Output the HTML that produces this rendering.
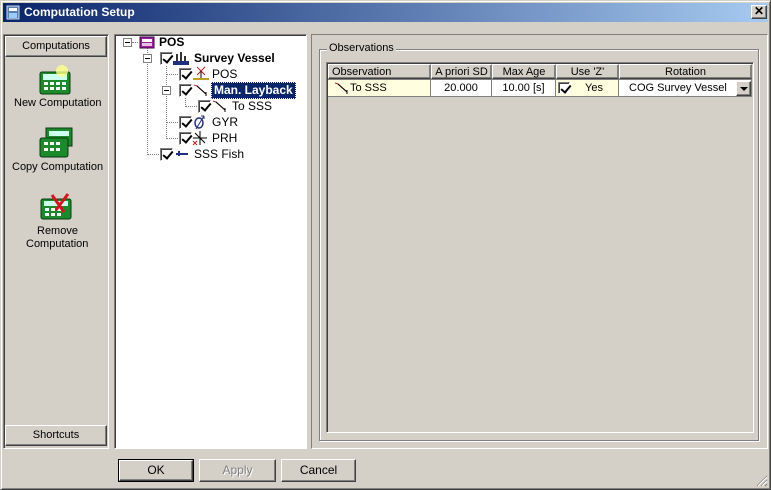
<!DOCTYPE html>
<html><head><style>
*{margin:0;padding:0;box-sizing:border-box}
body{width:771px;height:490px;background:#d4d0c8;font-family:"Liberation Sans",sans-serif;font-size:11px;position:relative;overflow:hidden;color:#000}
.a{position:absolute}
.raise{border:1px solid;border-color:#fff #404040 #404040 #fff;box-shadow:inset -1px -1px #808080}
.sunk{border:1px solid;border-color:#808080 #fff #fff #808080;box-shadow:inset 1px 1px #404040}
.etch{border:1px solid #808080;box-shadow:1px 1px #fff, inset 1px 1px #fff}
.cb{position:absolute;width:13px;height:13px;background:#fff;border:1px solid;border-color:#808080 #fff #fff #808080;box-shadow:inset 1px 1px #404040}
.cb:after{content:"";position:absolute;left:4px;top:0px;width:4px;height:8px;border:solid #000;border-width:0 2px 2px 0;transform:rotate(40deg)}
.ex{position:absolute;width:9px;height:9px;border:1px solid #808080;background:#fff}
.ex:after{content:"";position:absolute;left:1px;top:3px;width:5px;height:1px;background:#000}
.t{position:absolute;white-space:nowrap;font-size:12px}
.dv{position:absolute;border-left:1px dotted #808080}
.dh{position:absolute;border-top:1px dotted #808080}
.btn{position:absolute;height:23px;text-align:center;line-height:21px;font-size:12px}
.cell{position:absolute;top:0;height:100%;border-right:1px solid #808080;text-align:center;line-height:15px;font-size:11px}
</style></head><body>
<div class="a" style="left:0;top:0;width:771px;height:490px;border:1px solid;border-color:#d4d0c8 #404040 #404040 #d4d0c8;box-shadow:inset 1px 1px #fff,inset -1px -1px #808080"></div>
<div class="a" style="left:3px;top:3px;width:765px;height:19px;background:linear-gradient(to right,#0a246a,#a6caf0)"></div>
<svg class="a" style="left:6px;top:5px" width="14" height="15"><rect x="1" y="1" width="12" height="13" fill="#5a7fb0" stroke="#cde"/><rect x="3" y="3" width="8" height="3" fill="#fff"/><rect x="3" y="8" width="8" height="5" fill="#9cf"/></svg>
<div class="t" style="left:24px;top:5px;color:#fff;font-weight:bold;font-size:12px">Computation Setup</div>
<div class="a raise" style="left:751px;top:5px;width:16px;height:14px;background:#d4d0c8;text-align:center;font-size:12px;line-height:11px;font-weight:bold">✕</div>

<div class="a sunk" style="left:3px;top:34px;width:106px;height:415px"></div>
<div class="a raise" style="left:5px;top:36px;width:102px;height:21px;text-align:center;line-height:19px;font-size:11px">Computations</div>
<div class="a raise" style="left:5px;top:425px;width:102px;height:21px;text-align:center;line-height:19px;font-size:11px">Shortcuts</div>
<svg class="a" style="left:38px;top:64px" width="36" height="32"><rect x="2" y="8" width="30" height="22" rx="2" fill="#1a8a2a" stroke="#0a3a10"/><rect x="5" y="10" width="24" height="6" fill="#cfe"/><g fill="#fff"><rect x="6" y="18" width="4" height="3"/><rect x="12" y="18" width="4" height="3"/><rect x="18" y="18" width="4" height="3"/><rect x="24" y="18" width="4" height="3"/><rect x="6" y="23" width="4" height="3"/><rect x="12" y="23" width="4" height="3"/><rect x="18" y="23" width="4" height="3"/><rect x="24" y="23" width="4" height="3"/></g><circle cx="24" cy="7" r="6" fill="#ff8" opacity=".8"/></svg>
<div class="t" style="left:14px;top:97px;font-size:11px">New Computation</div>
<svg class="a" style="left:38px;top:126px" width="36" height="32"><rect x="8" y="2" width="26" height="18" fill="#1a8a2a" stroke="#0a3a10"/><rect x="11" y="5" width="20" height="5" fill="#cfe"/><rect x="2" y="12" width="28" height="19" rx="2" fill="#1a8a2a" stroke="#0a3a10"/><g fill="#fff"><rect x="6" y="16" width="4" height="3"/><rect x="12" y="16" width="4" height="3"/><rect x="18" y="16" width="4" height="3"/><rect x="6" y="22" width="4" height="3"/><rect x="12" y="22" width="4" height="3"/><rect x="18" y="22" width="4" height="3"/></g></svg>
<div class="t" style="left:12px;top:161px;font-size:11px">Copy Computation</div>
<svg class="a" style="left:38px;top:192px" width="36" height="30"><rect x="3" y="7" width="30" height="20" rx="2" fill="#1a8a2a" stroke="#0a3a10"/><rect x="6" y="9" width="24" height="5" fill="#cfe"/><g fill="#fff"><rect x="7" y="16" width="4" height="3"/><rect x="13" y="16" width="4" height="3"/><rect x="19" y="16" width="4" height="3"/><rect x="7" y="21" width="4" height="3"/><rect x="13" y="21" width="4" height="3"/><rect x="19" y="21" width="4" height="3"/></g><path d="M14 3 L26 20 M30 2 L18 18" stroke="#e01020" stroke-width="3"/></svg>
<div class="t" style="left:37px;top:225px;font-size:11px">Remove</div>
<div class="t" style="left:26px;top:238px;font-size:11px">Computation</div>

<div class="a sunk" style="left:114px;top:34px;width:193px;height:415px;background:#fff"></div>
<div class="dv" style="left:147px;top:48px;height:107px"></div>
<div class="dh" style="left:147px;top:154px;width:12px"></div>
<div class="dv" style="left:166px;top:64px;height:75px"></div>
<div class="dh" style="left:166px;top:74px;width:12px"></div>
<div class="dh" style="left:166px;top:122px;width:12px"></div>
<div class="dh" style="left:166px;top:138px;width:12px"></div>
<div class="dv" style="left:185px;top:96px;height:11px"></div>
<div class="dh" style="left:185px;top:106px;width:12px"></div>
<div class="dh" style="left:132px;top:42px;width:6px"></div>
<div class="ex" style="left:123px;top:38px"></div>
<svg class="a" style="left:139px;top:36px" width="16" height="13"><rect x="1" y="1" width="14" height="11" fill="#a020a0" stroke="#400040"/><rect x="3" y="3" width="10" height="3" fill="#fff"/><rect x="3" y="7" width="10" height="3" fill="#e8c0e8"/></svg>
<div class="t" style="left:159px;top:35px;font-weight:bold">POS</div>
<div class="ex" style="left:143px;top:54px"></div>
<div class="cb" style="left:160px;top:52px"></div>
<svg class="a" style="left:173px;top:51px" width="16" height="14"><rect x="0" y="10" width="16" height="4" fill="#203080"/><rect x="3" y="3" width="2" height="7" fill="#333"/><rect x="7" y="1" width="2" height="9" fill="#333"/><rect x="11" y="5" width="2" height="5" fill="#333"/></svg>
<div class="t" style="left:194px;top:51px;font-weight:bold">Survey Vessel</div>
<div class="cb" style="left:179px;top:68px"></div>
<svg class="a" style="left:192px;top:66px" width="18" height="15"><path d="M5 1l8 8M13 1l-8 8" stroke="#c02020"/><path d="M9 5v7" stroke="#000"/><rect x="1" y="12" width="16" height="2" fill="#c0a020"/></svg>
<div class="t" style="left:212px;top:67px">POS</div>
<div class="ex" style="left:162px;top:86px"></div>
<div class="cb" style="left:179px;top:84px"></div>
<svg class="a" style="left:193px;top:84px" width="16" height="13"><path d="M1 1l3 1L13 10" stroke="#c02020" fill="none"/><path d="M4 2l9 8" stroke="#000"/><path d="M13 8v4" stroke="#000"/></svg>
<div class="a" style="left:211px;top:82px;width:85px;height:17px;background:#0a246a;border:1px dotted #ffffc0"></div>
<div class="t" style="left:214px;top:83px;font-weight:bold;color:#fff">Man. Layback</div>
<div class="cb" style="left:198px;top:100px"></div>
<svg class="a" style="left:212px;top:100px" width="16" height="13"><path d="M1 1l3 1L13 10" stroke="#c02020" fill="none"/><path d="M4 2l9 8" stroke="#000"/><path d="M13 8v4" stroke="#000"/></svg>
<div class="t" style="left:232px;top:99px">To SSS</div>
<div class="cb" style="left:179px;top:116px"></div>
<svg class="a" style="left:192px;top:114px" width="16" height="16"><ellipse cx="7" cy="9" rx="4" ry="5" fill="none" stroke="#203080" stroke-width="1.5"/><path d="M4 15L12 2" stroke="#203080"/><path d="M12 2h-3M12 2v3" stroke="#203080"/></svg>
<div class="t" style="left:212px;top:115px">GYR</div>
<div class="cb" style="left:179px;top:132px"></div>
<svg class="a" style="left:192px;top:130px" width="16" height="16"><path d="M8 1v14M1 8h14M3 3l10 10" stroke="#000"/><path d="M1 11l4 4M5 11l-4 4" stroke="#c02020"/></svg>
<div class="t" style="left:212px;top:131px">PRH</div>
<div class="cb" style="left:160px;top:148px"></div>
<svg class="a" style="left:174px;top:148px" width="16" height="10"><rect x="2" y="5" width="12" height="2" fill="#203080"/><rect x="4" y="3" width="2" height="5" fill="#203080"/></svg>
<div class="t" style="left:194px;top:147px">SSS Fish</div>

<div class="a sunk" style="left:311px;top:34px;width:457px;height:415px;box-shadow:none"></div>
<div class="a etch" style="left:319px;top:49px;width:440px;height:392px"></div>
<div class="t" style="left:327px;top:42px;background:#d4d0c8;padding:0 2px;font-size:11px">Observations</div>
<div class="a sunk" style="left:326px;top:62px;width:428px;height:371px;background:#d4d0c8"></div>
<div class="a" style="left:328px;top:64px;width:424px;height:16px;background:#d4d0c8;border-bottom:1px solid #808080">
<div class="cell raise" style="left:0;width:103px;text-align:left;padding-left:3px">Observation</div>
<div class="cell raise" style="left:103px;width:61px">A priori SD</div>
<div class="cell raise" style="left:164px;width:64px">Max Age</div>
<div class="cell raise" style="left:228px;width:63px">Use 'Z'</div>
<div class="cell raise" style="left:291px;width:133px">Rotation</div>
</div>
<div class="a" style="left:328px;top:80px;width:424px;height:17px;background:#fff;border-bottom:1px solid #808080">
<div class="cell" style="left:0;width:103px;background:#ffffe0;text-align:left;padding-left:22px;line-height:16px">To SSS</div>
<svg class="a" style="left:334px;top:82px;position:fixed" width="16" height="13"><path d="M1 1l3 1L13 10" stroke="#c02020" fill="none"/><path d="M4 2l9 8" stroke="#000"/><path d="M13 8v4" stroke="#000"/></svg>
<div class="cell" style="left:103px;width:61px;line-height:16px">20.000</div>
<div class="cell" style="left:164px;width:64px;line-height:16px">10.00 [s]</div>
<div class="cell" style="left:228px;width:63px;background:#ffffe0;line-height:16px;padding-left:14px">Yes</div>
<div class="cb" style="left:230px;top:2px;width:12px;height:12px"></div>
<div class="cell" style="left:291px;width:133px;text-align:left;padding-left:10px;line-height:16px">COG Survey Vessel</div>
<div class="a raise" style="left:408px;top:1px;width:15px;height:15px;background:#d4d0c8"><div style="position:absolute;left:3px;top:5px;border:4px solid transparent;border-top:4px solid #000;border-bottom:0"></div></div>
</div>

<div class="btn" style="left:118px;top:459px;width:76px;border:1px solid #000;"><div class="raise" style="height:21px;line-height:19px">OK</div></div>
<div class="btn raise" style="left:199px;top:459px;width:77px;color:#808080;text-shadow:1px 1px #fff">Apply</div>
<div class="btn raise" style="left:281px;top:459px;width:75px">Cancel</div>
<svg class="a" style="left:755px;top:474px" width="13" height="13"><path d="M12 2L2 12M12 6L6 12M12 10L10 12" stroke="#808080"/><path d="M12 3L3 12M12 7L7 12" stroke="#fff"/></svg>
</body></html>
